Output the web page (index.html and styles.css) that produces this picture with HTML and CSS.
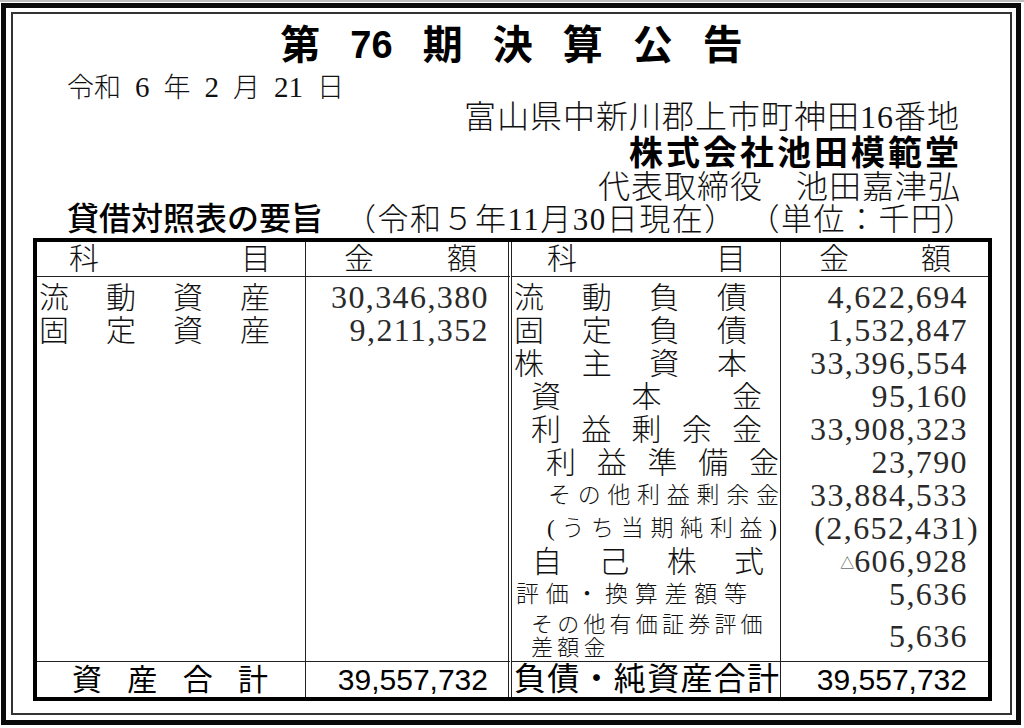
FILE: index.html
```html
<!DOCTYPE html>
<html lang="ja">
<head>
<meta charset="utf-8">
<title>第76期決算公告</title>
<link rel="stylesheet" href="styles.css">
</head>
<body>
<div class="frame">
  <div class="inner">
    <h1 class="title"><span>第</span><span class="tnum">76</span><span>期</span><span>決</span><span>算</span><span>公</span><span>告</span></h1>
    <div class="date"><span>令和</span><span class="dn">6</span><span>年</span><span class="dn">2</span><span>月</span><span class="dn">21</span><span>日</span></div>
    <div class="addr">富山県中新川郡上市町神田16番地</div>
    <div class="company">株式会社池田模範堂</div>
    <div class="rep">代表取締役　池田嘉津弘</div>
    <div class="bs-head">
      <span class="bs-title">貸借対照表の要旨</span>
      <span class="bs-date">（令和５年11月30日現在）</span>
      <span class="bs-unit">（単位：千円）</span>
    </div>

    <div class="bs">
      <!-- header -->
      <div class="cell hd c1"><div class="j hl1"><span>科</span><span>目</span></div></div>
      <div class="cell hd c2"><div class="j ha1"><span>金</span><span>額</span></div></div>
      <div class="cell hd c3"><div class="j hl2"><span>科</span><span>目</span></div></div>
      <div class="cell hd c4"><div class="j ha2"><span>金</span><span>額</span></div></div>

      <!-- body -->
      <div class="cell bd c1">
        <div class="row j lv0"><span>流</span><span>動</span><span>資</span><span>産</span></div>
        <div class="row j lv0"><span>固</span><span>定</span><span>資</span><span>産</span></div>
      </div>
      <div class="cell bd c2">
        <div class="row amt">30,346,380</div>
        <div class="row amt">9,211,352</div>
      </div>
      <div class="cell bd c3">
        <div class="row j lv0"><span>流</span><span>動</span><span>負</span><span>債</span></div>
        <div class="row j lv0"><span>固</span><span>定</span><span>負</span><span>債</span></div>
        <div class="row j lv0"><span>株</span><span>主</span><span>資</span><span>本</span></div>
        <div class="row j lv1"><span>資</span><span>本</span><span>金</span></div>
        <div class="row j lv1"><span>利</span><span>益</span><span>剰</span><span>余</span><span>金</span></div>
        <div class="row j lv2"><span>利</span><span>益</span><span>準</span><span>備</span><span>金</span></div>
        <div class="row j lv2s"><span>そ</span><span>の</span><span>他</span><span>利</span><span>益</span><span>剰</span><span>余</span><span>金</span></div>
        <div class="row j lv2p"><span>(</span><span>う</span><span>ち</span><span>当</span><span>期</span><span>純</span><span>利</span><span>益</span><span>)</span></div>
        <div class="row j lv1b"><span>自</span><span>己</span><span>株</span><span>式</span></div>
        <div class="row j lv0s"><span>評</span><span>価</span><span>・</span><span>換</span><span>算</span><span>差</span><span>額</span><span>等</span></div>
        <div class="row2 lv1w"><div class="wl">その他有価証券評価</div><div class="wl">差額金</div></div>
      </div>
      <div class="cell bd c4">
        <div class="row amt">4,622,694</div>
        <div class="row amt">1,532,847</div>
        <div class="row amt">33,396,554</div>
        <div class="row amt">95,160</div>
        <div class="row amt">33,908,323</div>
        <div class="row amt">23,790</div>
        <div class="row amt">33,884,533</div>
        <div class="row amt paren">(2,652,431)</div>
        <div class="row amt"><span class="tri">△</span>606,928</div>
        <div class="row amt">5,636</div>
        <div class="row2 amt">5,636</div>
      </div>

      <!-- totals -->
      <div class="cell tt c1"><div class="j tl1"><span>資</span><span>産</span><span>合</span><span>計</span></div></div>
      <div class="cell tt c2"><div class="tamt">39,557,732</div></div>
      <div class="cell tt c3"><div class="j tl2"><span>負</span><span>債</span><span>・</span><span>純</span><span>資</span><span>産</span><span>合</span><span>計</span></div></div>
      <div class="cell tt c4"><div class="tamt">39,557,732</div></div>
    </div>
  </div>
</div>
</body>
</html>
```

FILE: styles.css
```css
* {
  box-sizing: border-box;
  margin: 0;
  padding: 0;
}

html,
body {
  background: #fff;
}

body {
  border-top: 2px solid #bdbdbd;
  color: #111;
  font-family: "Liberation Serif", "Noto Sans CJK JP", serif;
  font-weight: 300;
}

.frame {
  margin: 1px 3px 0 1px;
  height: 722px;
  border: 5px solid #0a0a0a;
  padding: 4px 4px 5px 5px;
}

.inner {
  height: 100%;
  border: 2px solid #333;
}

/* ---------- heading block ---------- */
.title {
  margin-top: 9px;
  height: 44px;
  line-height: 44px;
  display: flex;
  justify-content: center;
  gap: 30px;
  font-family: "Liberation Sans", "Noto Sans CJK JP", sans-serif;
  font-size: 40px;
  font-weight: 700;
  color: #000;
}

.title .tnum {
  font-size: 38px;
}

.date {
  height: 36px;
  line-height: 40px;
  padding-left: 54px;
  display: flex;
  align-items: baseline;
  gap: 14px;
  font-size: 27px;
}

.date .dn {
  font-size: 29px;
}

.addr {
  height: 28px;
  line-height: 28px;
  text-align: right;
  padding-right: 50px;
  font-size: 32px;
  letter-spacing: 1px;
}

.company {
  margin-top: 4px;
  height: 36px;
  line-height: 36px;
  text-align: right;
  padding-right: 48px;
  font-family: "Liberation Sans", "Noto Sans CJK JP", sans-serif;
  font-size: 34px;
  font-weight: 700;
  letter-spacing: 3px;
  color: #000;
}

.rep {
  height: 32px;
  line-height: 32px;
  text-align: right;
  padding-right: 49px;
  font-size: 32px;
  letter-spacing: 1px;
}

.bs-head {
  height: 32px;
  line-height: 32px;
  display: flex;
  align-items: baseline;
  padding-left: 54px;
  padding-right: 34px;
}

.bs-title {
  font-family: "Liberation Sans", "Noto Sans CJK JP", sans-serif;
  font-size: 32px;
  font-weight: 500;
  color: #000;
}

.bs-date {
  margin-left: 22px;
  font-size: 31px;
  letter-spacing: 1.5px;
}

.bs-unit {
  margin-left: auto;
  font-size: 31px;
  letter-spacing: 1.5px;
}

/* ---------- balance sheet ---------- */
.bs {
  margin-top: 3px;
  margin-left: 20px;
  width: 959px;
  border: 4px solid #000;
  display: grid;
  grid-template-columns: 269px 206px 269px 207px;
  grid-template-rows: 35px 385px 35px;
}

.cell {
  border-right: 1px solid #222;
}

.c2 {
  border-right: 4px double #222;
}

.c4 {
  border-right: none;
}

.hd,
.bd {
  border-bottom: 1px solid #222;
}

.hd {
  font-size: 30px;
  line-height: 34px;
}

.bd {
  padding-top: 4px;
}

.j {
  display: flex;
  justify-content: space-between;
}

.hl1 { padding: 0 34px 0 32px; }
.ha1 { padding: 0 31px 0 38px; }
.hl2 { padding: 0 34px 0 35px; }
.ha2 { padding: 0 37px 0 38px; }

.row {
  height: 33px;
  line-height: 33px;
  font-size: 30px;
}

.row2 {
  height: 50px;
}

.lv0 { padding: 0 33px 0 2px; }
.c1 .lv0 { padding: 0 35px 0 2px; }
.lv1 { padding: 0 18px 0 19px; }
.lv2 { padding: 0 1px 0 34px; }
.lv1b { padding: 0 16px 0 20px; }

.lv2s {
  padding: 0 1px 0 36px;
  font-size: 23px;
}

.lv2p {
  padding: 0 3px 0 35px;
  font-size: 23px;
}

.lv0s {
  padding: 0 33px 0 4px;
  font-size: 23px;
}

.lv1w {
  padding: 2px 0 0 19px;
  font-size: 22px;
  letter-spacing: 4.2px;
}

.wl {
  height: 23px;
  line-height: 23px;
  white-space: nowrap;
}

.amt {
  text-align: right;
  font-size: 32px;
  letter-spacing: 1.4px;
  padding-right: 19px;
  color: #2a2a2a;
}

.c4 .amt {
  padding-right: 20px;
}

.c4 .paren {
  padding-right: 9px;
}

.row2.amt {
  line-height: 50px;
}

.tri {
  font-size: 14px;
  letter-spacing: 0;
  vertical-align: 4px;
}

.tt {
  font-family: "Liberation Sans", "Noto Sans CJK JP", sans-serif;
  font-weight: 400;
  color: #000;
  line-height: 35px;
}

.tl1 {
  padding: 0 37px 0 35px;
  font-size: 30px;
}

.tl2 {
  padding: 0 1px 0 2px;
  font-size: 32px;
}

.tamt {
  text-align: right;
  font-size: 30px;
  padding-right: 20px;
}

.c4 .tamt {
  padding-right: 21px;
}
```
